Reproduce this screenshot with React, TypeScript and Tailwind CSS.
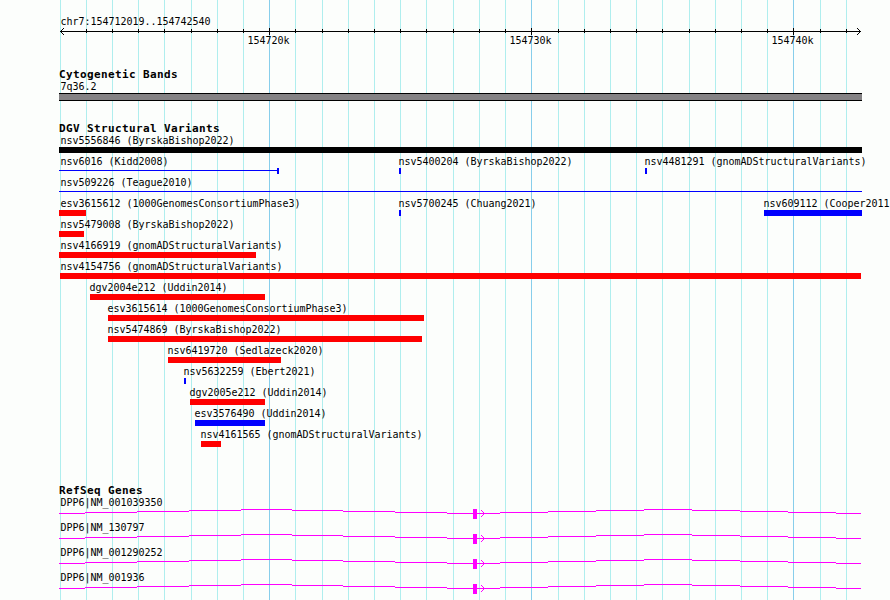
import React from "react";

interface Feature {
  name: string;
  labelX: number;
  start: number;
  end: number;
  color: string;
  // thin features are drawn as a line with an optional cap at the end
  thin?: boolean;
  cap?: boolean;
}

interface Gene {
  name: string;
}

const RED = "#ff0000";
const BLUE = "#0000ff";

const GRID = [
  60, 86, 112, 138, 164, 191, 217, 243, 269, 295, 322, 348, 374, 400, 426, 453,
  479, 505, 531, 558, 584, 610, 636, 662, 689, 715, 741, 767, 793, 820, 846,
];
const MAJOR = [269, 531, 793];

const ROWS: Feature[][] = [
  [{ name: "nsv5556846 (ByrskaBishop2022)", labelX: 60, start: 59, end: 862, color: "#000000" }],
  [
    { name: "nsv6016 (Kidd2008)", labelX: 60, start: 59, end: 279, color: BLUE, thin: true, cap: true },
    { name: "nsv5400204 (ByrskaBishop2022)", labelX: 398, start: 399, end: 401, color: BLUE },
    { name: "nsv4481291 (gnomADStructuralVariants)", labelX: 644, start: 645, end: 647, color: BLUE },
  ],
  [{ name: "nsv509226 (Teague2010)", labelX: 60, start: 59, end: 862, color: BLUE, thin: true }],
  [
    { name: "esv3615612 (1000GenomesConsortiumPhase3)", labelX: 60, start: 59, end: 86, color: RED },
    { name: "nsv5700245 (Chuang2021)", labelX: 398, start: 399, end: 401, color: BLUE },
    { name: "nsv609112 (Cooper2011", labelX: 763, start: 764, end: 862, color: BLUE },
  ],
  [{ name: "nsv5479008 (ByrskaBishop2022)", labelX: 60, start: 59, end: 84, color: RED }],
  [{ name: "nsv4166919 (gnomADStructuralVariants)", labelX: 60, start: 59, end: 256, color: RED }],
  [{ name: "nsv4154756 (gnomADStructuralVariants)", labelX: 60, start: 60, end: 861, color: RED }],
  [{ name: "dgv2004e212 (Uddin2014)", labelX: 89, start: 90, end: 265, color: RED }],
  [{ name: "esv3615614 (1000GenomesConsortiumPhase3)", labelX: 107, start: 108, end: 424, color: RED }],
  [{ name: "nsv5474869 (ByrskaBishop2022)", labelX: 107, start: 108, end: 422, color: RED }],
  [{ name: "nsv6419720 (Sedlazeck2020)", labelX: 167, start: 168, end: 281, color: RED }],
  [{ name: "nsv5632259 (Ebert2021)", labelX: 183, start: 184, end: 186, color: BLUE }],
  [{ name: "dgv2005e212 (Uddin2014)", labelX: 189, start: 190, end: 265, color: RED }],
  [{ name: "esv3576490 (Uddin2014)", labelX: 194, start: 195, end: 265, color: BLUE }],
  [{ name: "nsv4161565 (gnomADStructuralVariants)", labelX: 200, start: 201, end: 221, color: RED }],
];

const GENES: Gene[] = [
  { name: "DPP6|NM_001039350" },
  { name: "DPP6|NM_130797" },
  { name: "DPP6|NM_001290252" },
  { name: "DPP6|NM_001936" },
];

// intron steps: [start, end, y]
const INTRONS = [
  [59, 85, 4], [85, 137, 3], [137, 189, 2], [189, 241, 1], [241, 292, 0],
  [292, 343, 1], [343, 395, 2], [395, 447, 3], [447, 500, 4], [500, 548, 3],
  [548, 596, 2], [596, 644, 1], [644, 692, 0], [692, 740, 1], [740, 788, 2],
  [788, 836, 3], [836, 861, 4],
];

const Label: React.FC<{ x: number; children: React.ReactNode }> = ({ x, children }) => (
  <span
    className="col-start-1 row-start-1 h-3 whitespace-pre text-[10px] leading-3 tracking-[-0.02px]"
    style={{ marginLeft: x + 0.4 }}
  >
    {children}
  </span>
);

const TrackTitle: React.FC<{ children: React.ReactNode }> = ({ children }) => (
  <h2 className="ml-[59px] h-3 whitespace-pre text-[11px] font-bold leading-3 tracking-[0.378px]">{children}</h2>
);

const GridLines = () => (
  <svg className="absolute inset-0" width="890" height="600" shapeRendering="crispEdges">
    {GRID.map((x) => (
      <rect key={x} x={x} y={0} width={1} height={600} fill={MAJOR.includes(x) ? "#87ceeb" : "#afeeee"} />
    ))}
  </svg>
);

const Ruler = () => (
  <div className="pt-4">
    <div className="grid">
      <Label x={60}>chr7:154712019..154742540</Label>
    </div>
    <svg className="block" width="890" height="7" shapeRendering="crispEdges">
      <rect x={60} y={3} width={801} height={1} />
      {GRID.slice(1).map((x) =>
        MAJOR.includes(x) ? (
          <rect key={x} x={x} y={0} width={1} height={7} />
        ) : (
          <rect key={x} x={x} y={1} width={1} height={4} />
        )
      )}
      {[0, 1, 2, 3].map((i) => (
        <g key={i}>
          <rect x={60 + i} y={3 - i} width={1} height={1} />
          <rect x={60 + i} y={3 + i} width={1} height={1} />
          <rect x={860 - i} y={3 - i} width={1} height={1} />
          <rect x={860 - i} y={3 + i} width={1} height={1} />
        </g>
      ))}
    </svg>
    <div className="grid">
      <Label x={247}>154720k</Label>
      <Label x={509}>154730k</Label>
      <Label x={771}>154740k</Label>
    </div>
  </div>
);

const FeatureRow: React.FC<{ features: Feature[] }> = ({ features }) => (
  <div className="h-[21px]">
    <div className="grid">
      {features.map((f) => (
        <Label key={f.name} x={f.labelX}>{f.name}</Label>
      ))}
    </div>
    <svg className="block" width="890" height="6" shapeRendering="crispEdges">
      {features.map((f) => (
        <g key={f.name} fill={f.color}>
          <rect x={f.start} y={f.thin ? 2 : 0} width={f.end - f.start} height={f.thin ? 1 : 6} />
          {f.cap && <rect x={f.end - 2} y={0} width={2} height={6} />}
        </g>
      ))}
    </svg>
  </div>
);

const GeneRow: React.FC<{ gene: Gene }> = ({ gene }) => (
  <div className="h-[25px]">
    <div className="grid">
      <Label x={60}>{gene.name}</Label>
    </div>
    <svg className="block" width="890" height="10" shapeRendering="crispEdges" fill="#ff00ff">
      {INTRONS.map(([start, end, y]) => (
        <rect key={start} x={start} y={y} width={end - start} height={1} />
      ))}
      <rect x={473} y={0} width={4} height={10} />
      {[0, 1, 2].map((i) => (
        <g key={i}>
          <rect x={481 + i} y={1 + i} width={1} height={1} />
          <rect x={481 + i} y={7 - i} width={1} height={1} />
        </g>
      ))}
      <rect x={483} y={4} width={1} height={1} />
    </svg>
  </div>
);

export default function App() {
  return (
    <div className="relative h-[600px] w-[890px] overflow-hidden bg-[#fcfefc] font-['DejaVu_Sans_Mono',monospace] text-black">
      <GridLines />
      <main className="relative">
        <Ruler />

        <section className="pt-[22px]">
          <TrackTitle>Cytogenetic Bands</TrackTitle>
          <div className="grid">
            <Label x={60}>7q36.2</Label>
          </div>
          <div className="ml-[59px] h-2 w-[803px] border-y border-black bg-[#848284]" />
        </section>

        <section className="pt-[22px]">
          <TrackTitle>DGV Structural Variants</TrackTitle>
          {ROWS.map((features) => (
            <FeatureRow key={features[0].name} features={features} />
          ))}
        </section>

        <section className="pt-[35px]">
          <TrackTitle>RefSeq Genes</TrackTitle>
          {GENES.map((gene) => (
            <GeneRow key={gene.name} gene={gene} />
          ))}
        </section>
      </main>
    </div>
  );
}
